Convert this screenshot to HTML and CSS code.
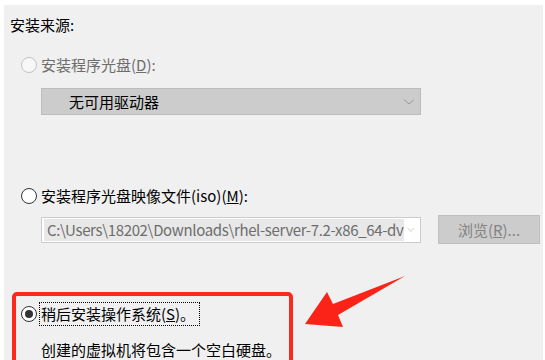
FILE: index.html
```html
<!DOCTYPE html>
<html lang="zh-CN">
<head>
    <meta charset="UTF-8">
    <title>新建虚拟机向导 - 安装来源</title>
    <link rel="stylesheet" href="styles.css">
</head>
<body>
    <div class="panel">
        <div class="title">安装来源:</div>

        <div class="option disabled">
            <span class="radio"></span>
            <span>安装程序光盘(<u>D</u>):</span>
        </div>
        <div class="drop">
            <span class="drop-text">无可用驱动器</span>
            <svg class="chev" width="12" height="8" viewBox="0 0 12 8"><polyline points="1,1.5 6,6 11,1.5" fill="none" stroke="#9a9a9a" stroke-width="1"/></svg>
        </div>

        <div class="option option-iso">
            <span class="radio"></span>
            <span>安装程序光盘映像文件(iso)(<u>M</u>):</span>
        </div>
        <div class="combo-row">
            <div class="combo">
                <span class="combo-text">C:\Users\18202\Downloads\rhel-server-7.2-x86_64-dv</span>
                <svg class="chev" width="12" height="8" viewBox="0 0 12 8"><polyline points="1,1.5 6,6 11,1.5" fill="none" stroke="#b0b0b0" stroke-width="1"/></svg>
            </div>
            <button class="browse" disabled>浏览(<u>R</u>)...</button>
        </div>

        <div class="highlight">
            <div class="option">
                <span class="radio checked"></span>
                <span class="focus">稍后安装操作系统(<u>S</u>)。</span>
            </div>
            <div class="note">创建的虚拟机将包含一个空白硬盘。</div>
        </div>

        <svg class="arrow" width="120" height="70" viewBox="0 0 120 70">
            <polygon points="120,3 48,31 42,19 20,51 58,54 53,42" fill="#fb2317"/>
        </svg>
        <div class="watermark">https://blog.csdn.net/qq_45918202</div>
    </div>
</body>
</html>
```

FILE: styles.css
```css
body {
    margin: 0;
    background-color: #fff;
    font-family: "Noto Sans CJK SC", "Noto Sans", sans-serif;
    font-size: 15px;
    color: #000;
    overflow: hidden;
}
.panel {
    position: relative;
    margin: 5px 2px 0 4px;
    height: 355px;
    padding-left: 6px;
    background-color: #f0f0f0;
    overflow: hidden;
}
.title {
    padding-top: 10px;
    height: 20px;
    line-height: 20px;
}
.option {
    display: flex;
    align-items: center;
    height: 20px;
    line-height: 20px;
    margin-left: 11px;
}
.disabled {
    margin-top: 20px;
    color: #6d6d6d;
}
.option-iso {
    margin-top: 71px;
}
.radio {
    box-sizing: border-box;
    width: 16px;
    height: 16px;
    margin-right: 4px;
    border: 1px solid #333;
    border-radius: 50%;
    background-color: #fff;
    display: flex;
    align-items: center;
    justify-content: center;
}
.disabled .radio {
    border-color: #c4c4c4;
    background-color: #f7f7f7;
}
.checked::after {
    content: "";
    width: 8px;
    height: 8px;
    border-radius: 50%;
    background-color: #333;
}
.drop {
    box-sizing: border-box;
    display: flex;
    align-items: center;
    margin: 13px 0 0 31px;
    width: 380px;
    height: 27px;
    border: 1px solid #bcbcbc;
    background-color: #cccccc;
}
.drop-text {
    flex: 1;
    padding-left: 27px;
}
.chev {
    margin-right: 5px;
}
.combo-row {
    display: flex;
    align-items: center;
    margin: 9px 0 0 31px;
    height: 29px;
}
.combo {
    box-sizing: border-box;
    display: flex;
    align-items: center;
    width: 380px;
    height: 26px;
    border: 1px solid #cccccc;
    background-color: #fff;
}
.combo-text {
    margin: 0 3px 0 2px;
    padding: 0 1px 0 3px;
    height: 22px;
    line-height: 22px;
    background-color: #e8e8e8;
    color: #6d6d6d;
    letter-spacing: -0.35px;
    white-space: nowrap;
}
.combo .chev {
    margin-left: auto;
}
.browse {
    box-sizing: border-box;
    margin-left: 17px;
    width: 102px;
    height: 29px;
    border: 1px solid #bfbfbf;
    background-color: #cccccc;
    color: #838383;
    font-family: inherit;
    font-size: 15px;
}
.highlight {
    box-sizing: border-box;
    margin: 48px 0 0 2px;
    width: 281px;
    height: 90px;
    padding: 8px 0 0 5px;
    border: 4px solid #fb2a1c;
    border-radius: 5px;
}
.highlight .option {
    margin-left: 0;
}
.focus {
    outline: 1px dotted #000;
    outline-offset: 1px;
    padding-right: 3px;
}
.note {
    margin: 16px 0 0 20px;
    height: 20px;
    line-height: 20px;
}
.arrow {
    position: absolute;
    left: 281px;
    top: 268px;
}
.watermark {
    position: absolute;
    left: 262px;
    top: 350px;
    color: #e2e2e2;
    font-size: 16px;
    letter-spacing: 3px;
}
```
